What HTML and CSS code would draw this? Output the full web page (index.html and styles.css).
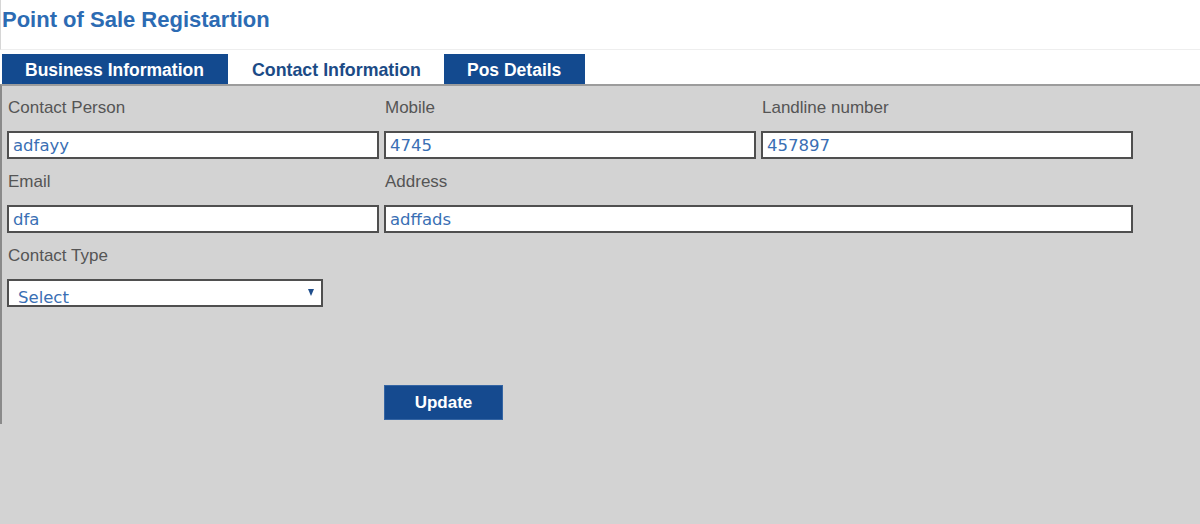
FILE: index.html
```html
<!DOCTYPE html>
<html lang="en">
<head>
<meta charset="utf-8">
<title>Point of Sale Registartion</title>
<link rel="stylesheet" href="styles.css">
</head>
<body>
<div class="page">
  <div class="title-bar">
    <h1 class="title">Point of Sale Registartion</h1>
  </div>
  <div class="tabs">
    <div class="tab tab-dark tab-first">Business Information</div>
    <div class="tab tab-active">Contact Information</div>
    <div class="tab tab-dark tab-last">Pos Details</div>
  </div>
  <div class="panel">
    <div class="form-grid">
      <div class="field">
        <label class="label">Contact Person</label>
        <input class="input" type="text" value="adfayy">
      </div>
      <div class="field">
        <label class="label">Mobile</label>
        <input class="input" type="text" value="4745">
      </div>
      <div class="field">
        <label class="label">Landline number</label>
        <input class="input" type="text" value="457897">
      </div>
      <div class="field">
        <label class="label">Email</label>
        <input class="input" type="text" value="dfa">
      </div>
      <div class="field field-wide">
        <label class="label">Address</label>
        <input class="input" type="text" value="adffads">
      </div>
      <div class="field">
        <label class="label">Contact Type</label>
        <div class="select-wrap">
          <select class="select">
            <option>Select</option>
          </select>
          <span class="select-arrow"></span>
        </div>
      </div>
      <div class="actions">
        <button class="btn" type="button">Update</button>
      </div>
    </div>
  </div>
</div>
</body>
</html>
```

FILE: styles.css
```css
html, body {
  margin: 0;
  padding: 0;
}

body {
  background: #d3d3d3;
  font-family: "Liberation Sans", Arial, sans-serif;
}

.page {
  width: 1200px;
}

.title-bar {
  background: #ffffff;
  height: 50px;
  border-left: 1px solid #d6d6d6;
  border-bottom: 1px solid #eeeeee;
  box-sizing: border-box;
}

.title {
  margin: 0;
  padding-left: 1px;
  font-size: 22px;
  line-height: 40px;
  font-weight: bold;
  color: #2c6bb3;
}

.tabs {
  display: flex;
  background: #ffffff;
  padding: 4px 0 0 2px;
  height: 30px;
}

.tab {
  height: 30px;
  box-sizing: border-box;
  padding: 2px 24px 0 23px;
  line-height: 28px;
  font-size: 17.5px;
  font-weight: bold;
  white-space: nowrap;
}

.tab-dark {
  background: #134a8f;
  color: #ffffff;
}

.tab-first {
  width: 226px;
}

.tab-last {
  width: 141px;
}

.tab-active {
  background: #ffffff;
  color: #1c4b86;
  font-size: 17.8px;
  width: 216px;
  padding-left: 24px;
  padding-right: 0;
}

.panel {
  border-top: 2px solid #9c9c9c;
  border-left: 2px solid #8a8a8a;
  background: #d3d3d3;
  padding: 0 0 4px 5px;
}

.form-grid {
  display: grid;
  grid-template-columns: 372px 372px 372px;
  column-gap: 5px;
  row-gap: 1px;
}

.field {
  padding-top: 12px;
  display: flex;
  flex-direction: column;
}

.field-wide {
  grid-column: 2 / 4;
}

.label {
  display: block;
  font-size: 17px;
  line-height: 20px;
  height: 20px;
  margin: 0 0 13px 1px;
  color: #555555;
}

.input {
  display: block;
  width: 100%;
  height: 28px;
  box-sizing: border-box;
  border: 2px solid #4f4f4f;
  background: #ffffff;
  padding: 0 4px;
  margin: 0;
  font-family: "DejaVu Sans", Verdana, sans-serif;
  font-size: 16.5px;
  color: #3a6fb4;
  outline: none;
}

.select-wrap {
  position: relative;
  width: 316px;
  height: 28px;
}

.select {
  -webkit-appearance: none;
  appearance: none;
  display: block;
  width: 100%;
  height: 28px;
  box-sizing: border-box;
  border: 2px solid #4f4f4f;
  border-radius: 0;
  background: #ffffff;
  padding: 7px 0 0 9px;
  margin: 0;
  font-family: "DejaVu Sans", Verdana, sans-serif;
  font-size: 16.5px;
  line-height: 20px;
  color: #3a6fb4;
  outline: none;
}

.select-arrow {
  position: absolute;
  right: 9px;
  top: 10px;
  width: 0;
  height: 0;
  border-left: 3.5px solid transparent;
  border-right: 3.5px solid transparent;
  border-top: 7px solid #1f4e8c;
  pointer-events: none;
}

.actions {
  grid-column: 2 / 3;
  grid-row: 4;
  padding-top: 77px;
}

.btn {
  display: block;
  width: 119px;
  height: 35px;
  box-sizing: border-box;
  background: #154a8f;
  border: 1px solid #3565a3;
  color: #ffffff;
  font-family: "Liberation Sans", Arial, sans-serif;
  font-size: 17px;
  font-weight: bold;
  padding: 0;
  margin: 0;
  cursor: pointer;
}
```
